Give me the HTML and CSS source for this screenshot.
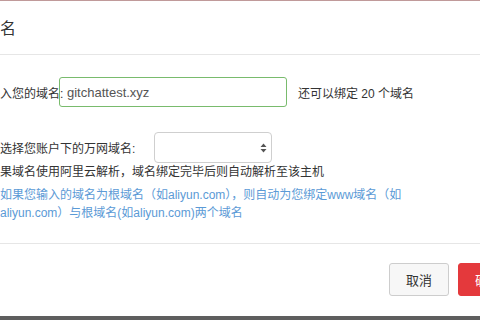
FILE: index.html
```html
<!DOCTYPE html>
<html>
<head>
<meta charset="utf-8">
<link rel="stylesheet" href="styles.css">
</head>
<body>
<div class="dialog">
  <div class="topline"></div>
  <div class="header"><span class="title">名</span></div>
  <div class="content">
    <div class="row row-input">
      <span class="label label-a">入您的域名:</span>
      <div class="input">gitchattest.xyz</div>
      <span class="hint">还可以绑定 20 个域名</span>
    </div>
    <div class="row row-select">
      <span class="label label-b">选择您账户下的万网域名:</span>
      <div class="select">
        <svg class="arrows" width="7" height="10" viewBox="0 0 7 10"><path d="M3.5 0.5 L6.5 4 L0.5 4 Z M3.5 9.5 L6.5 6 L0.5 6 Z" fill="#555"/></svg>
      </div>
    </div>
    <p class="note">果域名使用阿里云解析，域名绑定完毕后则自动解析至该主机</p>
    <p class="tip">如果您输入的域名为根域名（如aliyun.com），则自动为您绑定www域名（如<br>aliyun.com）与根域名(如aliyun.com)两个域名</p>
  </div>
  <div class="footer">
    <button class="btn btn-cancel">取消</button>
    <button class="btn btn-ok">确定</button>
  </div>
  <div class="bottomstrip"></div>
</div>
</body>
</html>
```
FILE: styles.css
```css
html, body {
  margin: 0;
  padding: 0;
  background: #fff;
}
body {
  width: 480px;
  height: 320px;
  overflow: hidden;
  font-family: "Liberation Sans", "Noto Sans CJK SC", sans-serif;
  color: #333;
}
.dialog {
  width: 480px;
  height: 320px;
  overflow: hidden;
  display: flex;
  flex-direction: column;
}
.topline {
  height: 1px;
  background: #c09a9a;
  flex: none;
}
.header {
  height: 53px;
  border-bottom: 1px solid #e6e6e6;
  display: flex;
  align-items: center;
  flex: none;
}
.title {
  font-size: 16px;
  color: #333;
  margin-top: -1px;
}
.content {
  padding: 22px 0 21px 0;
  border-bottom: 1px solid #e6e6e6;
  flex: none;
}
.row {
  display: flex;
  align-items: center;
}
.label {
  font-size: 12px;
  white-space: nowrap;
  color: #333;
}
.label-a {
  width: 59px;
}
.input {
  box-sizing: border-box;
  width: 228px;
  height: 30px;
  border: 1px solid #79bb6d;
  border-radius: 3px;
  font-family: "Liberation Sans", "Noto Sans", sans-serif;
  font-size: 13px;
  color: #555;
  padding-left: 7px;
  display: flex;
  align-items: center;
}
.hint {
  margin-left: 11px;
  font-size: 12px;
  color: #333;
  white-space: nowrap;
}
.row-select {
  margin-top: 25px;
}
.label-b {
  width: 154px;
}
.select {
  box-sizing: border-box;
  width: 118px;
  height: 31px;
  border: 1px solid #cfcfcf;
  border-radius: 4px;
  display: flex;
  align-items: center;
  justify-content: flex-end;
  padding-right: 4px;
}
.arrows {
  display: block;
}
.note {
  margin: 0;
  font-size: 12px;
  line-height: 18px;
  white-space: nowrap;
  color: #333;
}
.tip {
  margin: 5px 0 0 0;
  font-size: 12px;
  line-height: 18px;
  white-space: nowrap;
  color: #5b9ad6;
}
.footer {
  display: flex;
  gap: 9px;
  padding: 19px 0 20px 389px;
  flex: none;
}
.btn {
  flex: none;
  box-sizing: border-box;
  width: 60px;
  height: 33px;
  border-radius: 3px;
  font-family: "Noto Sans CJK SC", sans-serif;
  font-size: 13px;
  padding: 0;
}
.btn-cancel {
  background: #f7f7f7;
  border: 1px solid #cdcdcd;
  color: #333;
}
.btn-ok {
  background: #e4393c;
  border: 1px solid #e4393c;
  color: #fff;
}
.bottomstrip {
  height: 4px;
  background: #5e5e5e;
  flex: none;
}
```
